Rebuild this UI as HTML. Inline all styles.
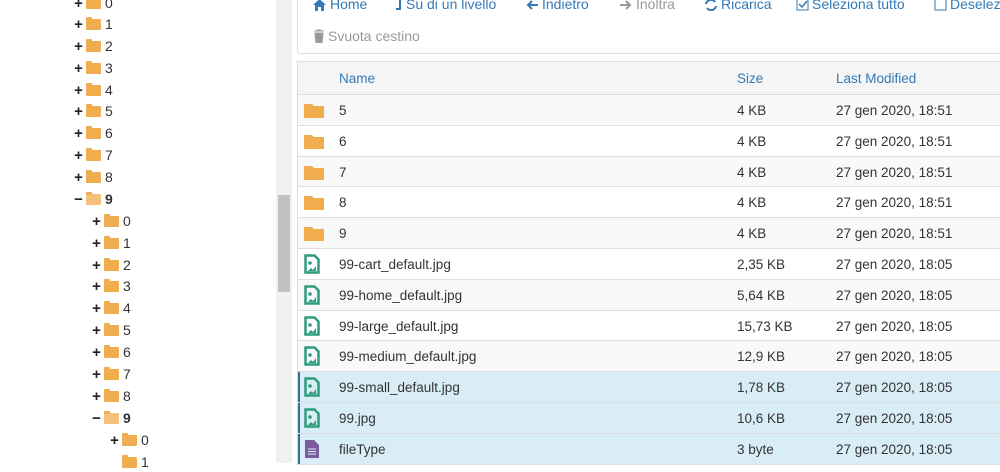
<!DOCTYPE html>
<html><head><meta charset="utf-8">
<style>
*{margin:0;padding:0;box-sizing:border-box}
body{width:1000px;height:463px;overflow:hidden;background:#fff;font-family:"Liberation Sans",sans-serif;position:relative}
.t{position:absolute;font-size:14px;color:#333;display:flex;align-items:center;height:20px}
.pm{width:11px;font-weight:bold;font-size:15px;color:#222;text-align:center;margin-right:2px}
.fd{width:15px;height:11px;background:#f0ad4e;border-radius:1px;position:relative;margin-right:4px}
.fd:before{content:"";position:absolute;left:0;top:-2px;width:6px;height:3px;background:#f0ad4e;border-radius:1px 1px 0 0}
#track{position:absolute;left:276px;top:0;width:16px;height:463px;background:#f1f1f1}
#thumb{position:absolute;left:278px;top:195px;width:12px;height:97px;background:#c1c1c1}
#tb{position:absolute;left:297px;top:-4px;width:710px;height:58px;border:1px solid #ddd;border-radius:3px}
.b{position:absolute;font-size:14px;color:#337ab7;display:flex;align-items:center;gap:3px}
#tbl{position:absolute;left:297px;top:61px;width:710px;border:1px solid #ddd;border-right:none}
.r{height:30.8px;border-top:1px solid #ddd;position:relative;font-size:13.5px;color:#333}
.r span{position:absolute;top:8px}
.hd{background:#f5f5f5;border-top:none;height:32px}
.hd span{color:#337ab7;top:9px}
.odd{background:#f9f9f9}
.sel{background:#d9edf7;box-shadow:inset 2px 0 0 #31708f}
.ic{position:absolute;left:6px;top:5px}
</style></head><body>
<div class="t" style="left:73px;top:-7px"><span class="pm">+</span><span class="fd"></span>0</div>
<div class="t" style="left:73px;top:14px"><span class="pm">+</span><span class="fd"></span>1</div>
<div class="t" style="left:73px;top:36px"><span class="pm">+</span><span class="fd"></span>2</div>
<div class="t" style="left:73px;top:58px"><span class="pm">+</span><span class="fd"></span>3</div>
<div class="t" style="left:73px;top:80px"><span class="pm">+</span><span class="fd"></span>4</div>
<div class="t" style="left:73px;top:101px"><span class="pm">+</span><span class="fd"></span>5</div>
<div class="t" style="left:73px;top:123px"><span class="pm">+</span><span class="fd"></span>6</div>
<div class="t" style="left:73px;top:145px"><span class="pm">+</span><span class="fd"></span>7</div>
<div class="t" style="left:73px;top:167px"><span class="pm">+</span><span class="fd"></span>8</div>
<div class="t" style="left:73px;top:189px;font-weight:bold"><span class="pm">−</span><span class="fd" style="background:#f5c07a"></span>9</div>
<div class="t" style="left:91px;top:211px"><span class="pm">+</span><span class="fd"></span>0</div>
<div class="t" style="left:91px;top:233px"><span class="pm">+</span><span class="fd"></span>1</div>
<div class="t" style="left:91px;top:255px"><span class="pm">+</span><span class="fd"></span>2</div>
<div class="t" style="left:91px;top:276px"><span class="pm">+</span><span class="fd"></span>3</div>
<div class="t" style="left:91px;top:298px"><span class="pm">+</span><span class="fd"></span>4</div>
<div class="t" style="left:91px;top:320px"><span class="pm">+</span><span class="fd"></span>5</div>
<div class="t" style="left:91px;top:342px"><span class="pm">+</span><span class="fd"></span>6</div>
<div class="t" style="left:91px;top:364px"><span class="pm">+</span><span class="fd"></span>7</div>
<div class="t" style="left:91px;top:386px"><span class="pm">+</span><span class="fd"></span>8</div>
<div class="t" style="left:91px;top:408px;font-weight:bold"><span class="pm">−</span><span class="fd" style="background:#f5c07a"></span>9</div>
<div class="t" style="left:109px;top:430px"><span class="pm">+</span><span class="fd"></span>0</div>
<div class="t" style="left:109px;top:452px"><span class="pm"></span><span class="fd"></span>1</div>
<div id="track"></div><div id="thumb"></div>
<div id="tb"></div>
<div class="b" style="left:312px;top:-4px"><svg width="15" height="13"><path d="M7.5 1L1 7h2v6h3V9h3v4h3V7h2z" fill="#337ab7"/></svg>Home</div>
<div class="b" style="left:395px;top:-4px"><svg width="8" height="13"><path d="M5 0v11H1" stroke="#337ab7" stroke-width="2" fill="none"/></svg>Su di un livello</div>
<div class="b" style="left:525px;top:-4px"><svg width="14" height="13"><path d="M13 7H3M7 3L3 7l4 4" stroke="#337ab7" stroke-width="2" fill="none"/></svg>Indietro</div>
<div class="b" style="left:619px;top:-4px;color:#999"><svg width="14" height="13"><path d="M1 7h10M7 3l4 4-4 4" stroke="#999" stroke-width="2" fill="none"/></svg>Inoltra</div>
<div class="b" style="left:704px;top:-4px"><svg width="14" height="13"><path d="M2 6a5 5 0 0 1 9-2M12 8a5 5 0 0 1-9 2" stroke="#337ab7" stroke-width="2" fill="none"/></svg>Ricarica</div>
<div class="b" style="left:796px;top:-4px"><svg width="13" height="13"><rect x="1" y="1" width="11" height="11" stroke="#337ab7" fill="none"/><path d="M3 6l3 3 5-6" stroke="#337ab7" stroke-width="1.5" fill="none"/></svg>Seleziona tutto</div>
<div class="b" style="left:934px;top:-4px"><svg width="13" height="13"><rect x="1" y="1" width="11" height="11" stroke="#337ab7" fill="none"/></svg>Deselezion</div>
<div class="b" style="left:313px;top:28px;color:#999"><svg width="12" height="14"><path d="M1 2h10M4 1h4M2 4h8l-1 10H3z" fill="#999" stroke="#999"/></svg>Svuota cestino</div>
<div id="tbl">
<div class="r hd"><span style="left:41px">Name</span><span style="left:439px">Size</span><span style="left:538px">Last Modified</span></div>
<div class="r odd"><svg class="ic" width="20" height="18"><path d="M0 4h8l2 2h10v12H0z" fill="#f0ad4e"/></svg><span style="left:41px">5</span><span style="left:439px">4 KB</span><span style="left:538px">27 gen 2020, 18:51</span></div>
<div class="r"><svg class="ic" width="20" height="18"><path d="M0 4h8l2 2h10v12H0z" fill="#f0ad4e"/></svg><span style="left:41px">6</span><span style="left:439px">4 KB</span><span style="left:538px">27 gen 2020, 18:51</span></div>
<div class="r odd"><svg class="ic" width="20" height="18"><path d="M0 4h8l2 2h10v12H0z" fill="#f0ad4e"/></svg><span style="left:41px">7</span><span style="left:439px">4 KB</span><span style="left:538px">27 gen 2020, 18:51</span></div>
<div class="r"><svg class="ic" width="20" height="18"><path d="M0 4h8l2 2h10v12H0z" fill="#f0ad4e"/></svg><span style="left:41px">8</span><span style="left:439px">4 KB</span><span style="left:538px">27 gen 2020, 18:51</span></div>
<div class="r odd"><svg class="ic" width="20" height="18"><path d="M0 4h8l2 2h10v12H0z" fill="#f0ad4e"/></svg><span style="left:41px">9</span><span style="left:439px">4 KB</span><span style="left:538px">27 gen 2020, 18:51</span></div>
<div class="r"><svg class="ic" width="16" height="20"><path d="M1.5 1.5h9l4 4v13h-13z" fill="none" stroke="#2e9c7e" stroke-width="2.5"/><circle cx="6" cy="9" r="1.8" fill="#2e9c7e"/><path d="M4 17l3-3 2 2 3-4v5z" fill="#2e9c7e"/></svg><span style="left:41px">99-cart_default.jpg</span><span style="left:439px">2,35 KB</span><span style="left:538px">27 gen 2020, 18:05</span></div>
<div class="r odd"><svg class="ic" width="16" height="20"><path d="M1.5 1.5h9l4 4v13h-13z" fill="none" stroke="#2e9c7e" stroke-width="2.5"/><circle cx="6" cy="9" r="1.8" fill="#2e9c7e"/><path d="M4 17l3-3 2 2 3-4v5z" fill="#2e9c7e"/></svg><span style="left:41px">99-home_default.jpg</span><span style="left:439px">5,64 KB</span><span style="left:538px">27 gen 2020, 18:05</span></div>
<div class="r"><svg class="ic" width="16" height="20"><path d="M1.5 1.5h9l4 4v13h-13z" fill="none" stroke="#2e9c7e" stroke-width="2.5"/><circle cx="6" cy="9" r="1.8" fill="#2e9c7e"/><path d="M4 17l3-3 2 2 3-4v5z" fill="#2e9c7e"/></svg><span style="left:41px">99-large_default.jpg</span><span style="left:439px">15,73 KB</span><span style="left:538px">27 gen 2020, 18:05</span></div>
<div class="r odd"><svg class="ic" width="16" height="20"><path d="M1.5 1.5h9l4 4v13h-13z" fill="none" stroke="#2e9c7e" stroke-width="2.5"/><circle cx="6" cy="9" r="1.8" fill="#2e9c7e"/><path d="M4 17l3-3 2 2 3-4v5z" fill="#2e9c7e"/></svg><span style="left:41px">99-medium_default.jpg</span><span style="left:439px">12,9 KB</span><span style="left:538px">27 gen 2020, 18:05</span></div>
<div class="r sel"><svg class="ic" width="16" height="20"><path d="M1.5 1.5h9l4 4v13h-13z" fill="none" stroke="#2e9c7e" stroke-width="2.5"/><circle cx="6" cy="9" r="1.8" fill="#2e9c7e"/><path d="M4 17l3-3 2 2 3-4v5z" fill="#2e9c7e"/></svg><span style="left:41px">99-small_default.jpg</span><span style="left:439px">1,78 KB</span><span style="left:538px">27 gen 2020, 18:05</span></div>
<div class="r sel"><svg class="ic" width="16" height="20"><path d="M1.5 1.5h9l4 4v13h-13z" fill="none" stroke="#2e9c7e" stroke-width="2.5"/><circle cx="6" cy="9" r="1.8" fill="#2e9c7e"/><path d="M4 17l3-3 2 2 3-4v5z" fill="#2e9c7e"/></svg><span style="left:41px">99.jpg</span><span style="left:439px">10,6 KB</span><span style="left:538px">27 gen 2020, 18:05</span></div>
<div class="r sel"><svg class="ic" width="16" height="20"><path d="M1 1h9l5 5v13H1z" fill="#7a5c9e"/><path d="M4 10h8M4 12.5h8M4 15h8" stroke="#d9edf7" stroke-width="1"/></svg><span style="left:41px">fileType</span><span style="left:439px">3 byte</span><span style="left:538px">27 gen 2020, 18:05</span></div>
</div>
</body></html>
